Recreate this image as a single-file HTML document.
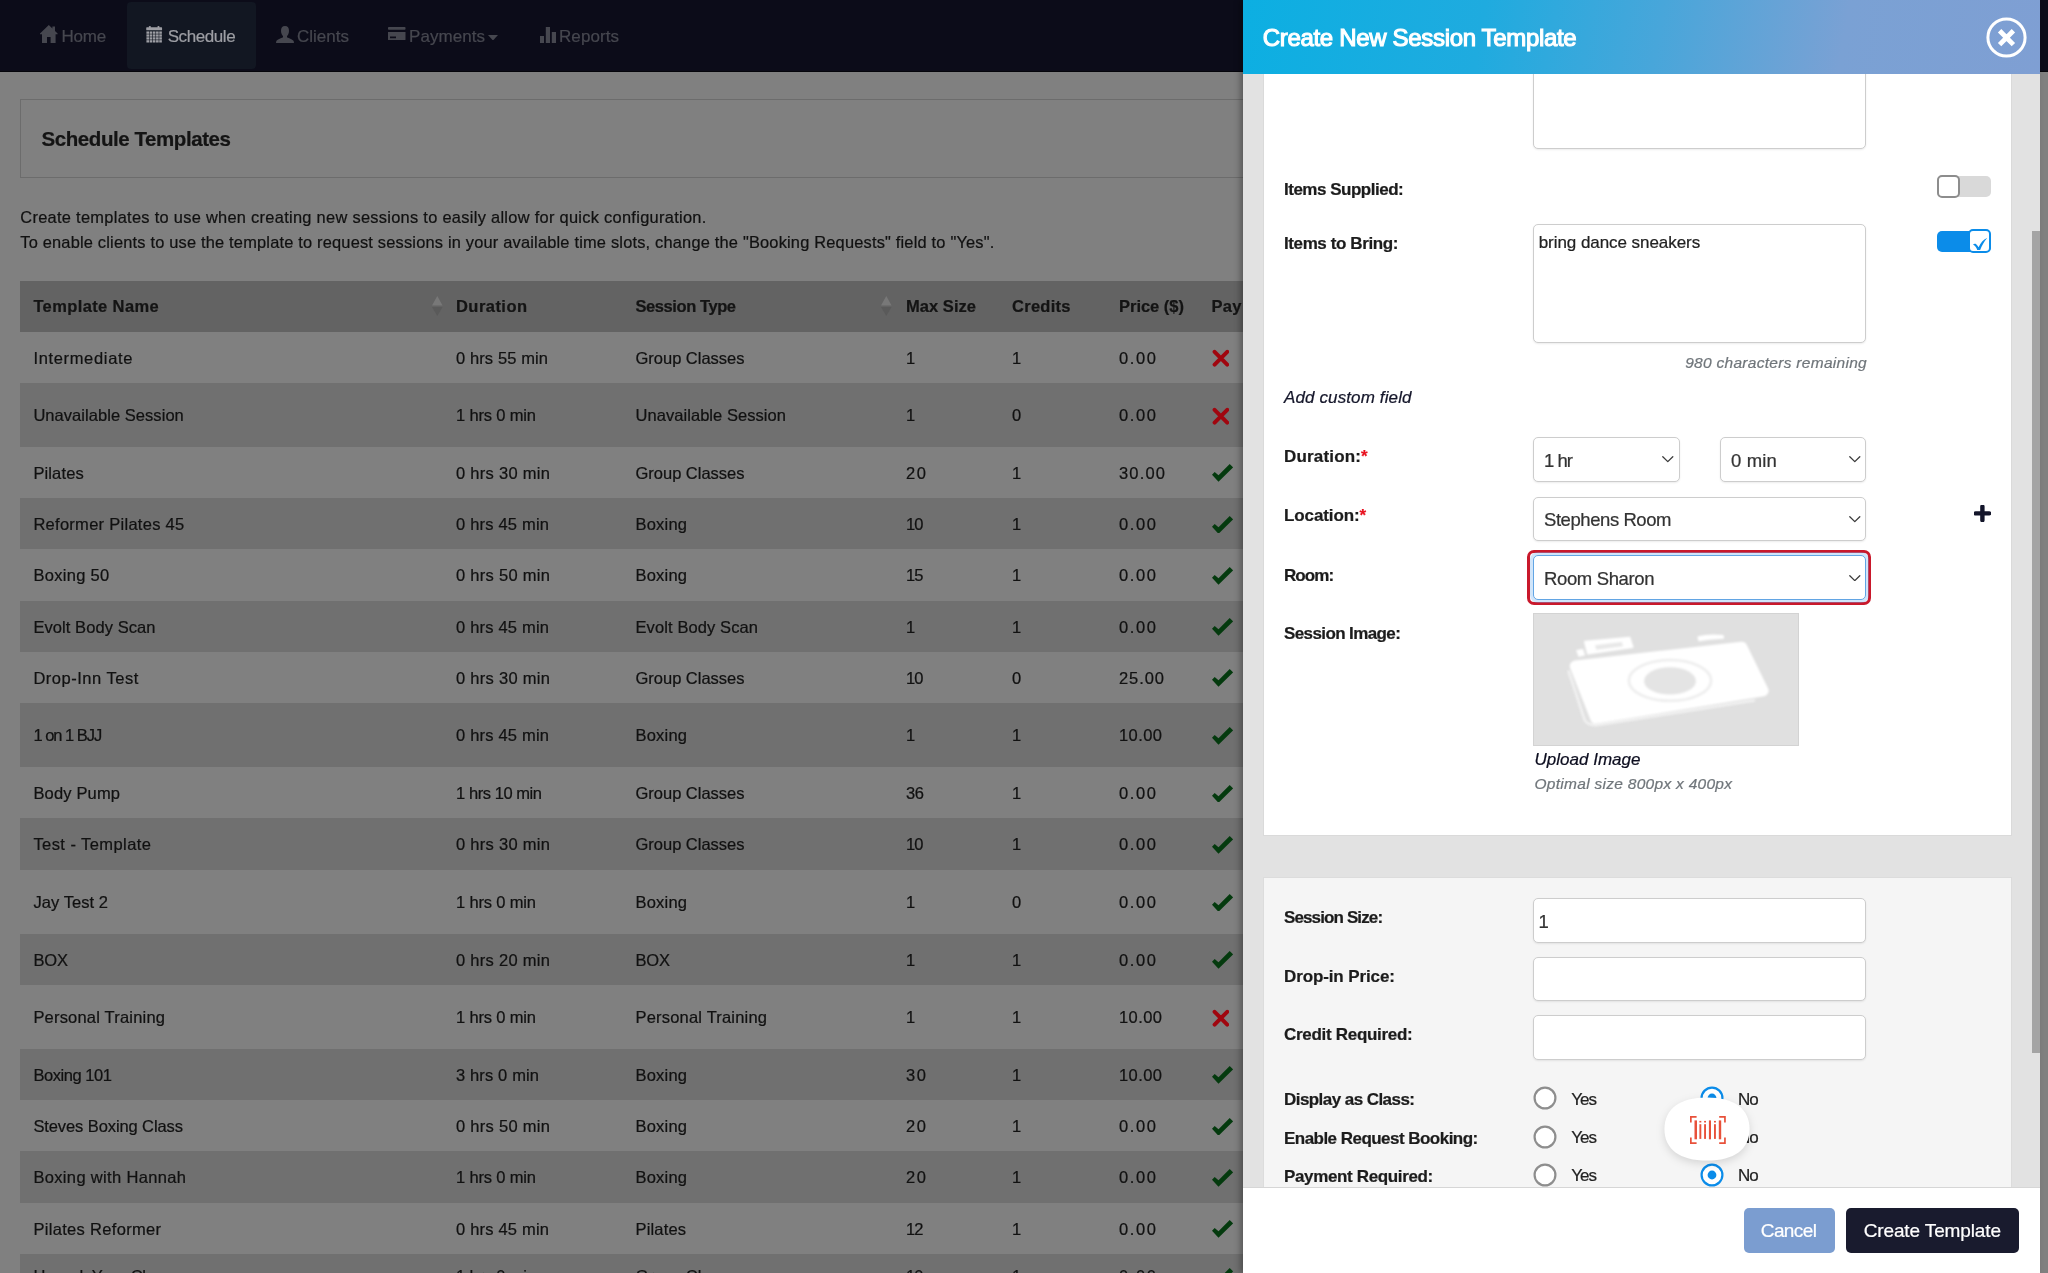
<!DOCTYPE html>
<html lang="en"><head><meta charset="utf-8"><title>Schedule Templates</title>
<style>
html,body{margin:0;padding:0}
body{width:2048px;height:1273px;overflow:hidden;position:relative;background:#808080;font-family:"Liberation Sans", sans-serif;}
.t{position:absolute;white-space:nowrap;line-height:1;display:block}
#bgl,#drawer{position:absolute;left:0;top:0;width:2048px;height:1273px;overflow:hidden;will-change:transform}
.t{-webkit-text-stroke:0.22px currentColor}
</style></head><body>
<div id="bgl">
<div style="position:absolute;left:0.00px;top:0.00px;width:2048.00px;height:71.50px;background:#0c0c19;border-bottom:1px solid #05050b;box-sizing:border-box;"></div>
<div style="position:absolute;left:126.50px;top:2.00px;width:129.10px;height:67.00px;background:#121722;border-radius:4px;"></div>
<svg style="position:absolute;left:40.20px;top:24.90px;" width="17.60" height="18.30" viewBox="0 0 176 183"><path fill="#46474f" d="M88 0 L0 84 L0 92 L20 92 L20 183 L70 183 L70 120 L106 120 L106 183 L156 183 L156 92 L176 92 L176 84 L150 59 L150 14 L124 14 L124 34 Z"/></svg>
<svg style="position:absolute;left:146.40px;top:25.70px;" width="16.30" height="17.10" viewBox="0 0 163 176"><g fill="#9d9ea4"><rect x="0" y="14" width="163" height="30" rx="6"/><rect x="28" y="0" width="18" height="30" rx="6"/><rect x="117" y="0" width="18" height="30" rx="6"/><rect x="2" y="56" width="27" height="24"/><rect x="35" y="56" width="27" height="24"/><rect x="68" y="56" width="27" height="24"/><rect x="101" y="56" width="27" height="24"/><rect x="134" y="56" width="27" height="24"/><rect x="2" y="86" width="27" height="24"/><rect x="35" y="86" width="27" height="24"/><rect x="68" y="86" width="27" height="24"/><rect x="101" y="86" width="27" height="24"/><rect x="134" y="86" width="27" height="24"/><rect x="2" y="116" width="27" height="24"/><rect x="35" y="116" width="27" height="24"/><rect x="68" y="116" width="27" height="24"/><rect x="101" y="116" width="27" height="24"/><rect x="134" y="116" width="27" height="24"/><rect x="2" y="146" width="27" height="24"/><rect x="35" y="146" width="27" height="24"/><rect x="68" y="146" width="27" height="24"/><rect x="101" y="146" width="27" height="24"/><rect x="134" y="146" width="27" height="24"/></g></svg>
<svg style="position:absolute;left:276.00px;top:25.50px;" width="18.00" height="17.50" viewBox="0 0 180 175"><path fill="#46474f" d="M90 0 C62 0 50 20 50 48 C50 72 60 92 70 100 L70 112 C50 122 10 134 4 150 C0 160 0 175 0 175 L180 175 C180 175 180 160 176 150 C170 134 130 122 110 112 L110 100 C120 92 130 72 130 48 C130 20 118 0 90 0 Z"/></svg>
<svg style="position:absolute;left:388.00px;top:26.80px;" width="17.50" height="13.50" viewBox="0 0 175 135"><g fill="#46474f"><rect x="0" y="0" width="175" height="28" rx="8"/><path d="M0 50 H175 V123 a12 12 0 0 1 -12 12 H12 a12 12 0 0 1 -12 -12 Z M20 95 V112 H80 V95 Z"/></g></svg>
<svg style="position:absolute;left:488.00px;top:34.50px;" width="10.00" height="5.50" viewBox="0 0 10 5.5"><path fill="#46474f" d="M0 0 H10 L5 5.5 Z"/></svg>
<svg style="position:absolute;left:539.50px;top:26.50px;" width="16.00" height="16.50" viewBox="0 0 160 165"><g fill="#46474f"><rect x="0" y="90" width="40" height="75"/><rect x="58" y="0" width="42" height="165"/><rect x="118" y="50" width="42" height="115"/></g></svg>
<div style="position:absolute;left:20.00px;top:99.00px;width:2008.00px;height:79.00px;border:1px solid #6c6c6c;box-sizing:border-box;"></div>
<div style="position:absolute;left:20.00px;top:280.60px;width:2008.00px;height:51.10px;background:#636363;"></div>
<svg style="position:absolute;left:432.00px;top:296.00px;" width="10.60" height="20.00" viewBox="0 0 10.6 20"><path fill="#787878" d="M5.3 0 L10.6 9.6 H0 Z"/><path fill="#5a5a5a" d="M0 10.9 H10.6 L5.3 20 Z"/></svg>
<svg style="position:absolute;left:881.00px;top:296.00px;" width="10.60" height="20.00" viewBox="0 0 10.6 20"><path fill="#787878" d="M5.3 0 L10.6 9.6 H0 Z"/><path fill="#5a5a5a" d="M0 10.9 H10.6 L5.3 20 Z"/></svg>
<svg style="position:absolute;left:1211.50px;top:349.02px;" width="17.80" height="18.40" viewBox="0 0 17.8 18.4"><path stroke="#a0060f" stroke-width="4.0" stroke-linecap="round" fill="none" d="M2.6 2.8 L15.2 15.6 M15.2 2.8 L2.6 15.6"/></svg>
<div style="position:absolute;left:20.00px;top:382.95px;width:2008.00px;height:64.00px;background:#707070;"></div>
<svg style="position:absolute;left:1211.50px;top:406.65px;" width="17.80" height="18.40" viewBox="0 0 17.8 18.4"><path stroke="#a0060f" stroke-width="4.0" stroke-linecap="round" fill="none" d="M2.6 2.8 L15.2 15.6 M15.2 2.8 L2.6 15.6"/></svg>
<svg style="position:absolute;left:1211.80px;top:464.38px;" width="21.20" height="17.80" viewBox="0 0 21.2 17.8"><path fill="#043a0e" d="M2.7 8.1 L0 10.8 L6.5 17.8 L21.2 3.4 L17.7 0 L6.5 11.3 Z"/></svg>
<div style="position:absolute;left:20.00px;top:498.20px;width:2008.00px;height:51.25px;background:#707070;"></div>
<svg style="position:absolute;left:1211.80px;top:515.62px;" width="21.20" height="17.80" viewBox="0 0 21.2 17.8"><path fill="#043a0e" d="M2.7 8.1 L0 10.8 L6.5 17.8 L21.2 3.4 L17.7 0 L6.5 11.3 Z"/></svg>
<svg style="position:absolute;left:1211.80px;top:566.88px;" width="21.20" height="17.80" viewBox="0 0 21.2 17.8"><path fill="#043a0e" d="M2.7 8.1 L0 10.8 L6.5 17.8 L21.2 3.4 L17.7 0 L6.5 11.3 Z"/></svg>
<div style="position:absolute;left:20.00px;top:600.70px;width:2008.00px;height:51.25px;background:#707070;"></div>
<svg style="position:absolute;left:1211.80px;top:618.12px;" width="21.20" height="17.80" viewBox="0 0 21.2 17.8"><path fill="#043a0e" d="M2.7 8.1 L0 10.8 L6.5 17.8 L21.2 3.4 L17.7 0 L6.5 11.3 Z"/></svg>
<svg style="position:absolute;left:1211.80px;top:669.38px;" width="21.20" height="17.80" viewBox="0 0 21.2 17.8"><path fill="#043a0e" d="M2.7 8.1 L0 10.8 L6.5 17.8 L21.2 3.4 L17.7 0 L6.5 11.3 Z"/></svg>
<div style="position:absolute;left:20.00px;top:703.20px;width:2008.00px;height:64.00px;background:#707070;"></div>
<svg style="position:absolute;left:1211.80px;top:727.00px;" width="21.20" height="17.80" viewBox="0 0 21.2 17.8"><path fill="#043a0e" d="M2.7 8.1 L0 10.8 L6.5 17.8 L21.2 3.4 L17.7 0 L6.5 11.3 Z"/></svg>
<svg style="position:absolute;left:1211.80px;top:784.62px;" width="21.20" height="17.80" viewBox="0 0 21.2 17.8"><path fill="#043a0e" d="M2.7 8.1 L0 10.8 L6.5 17.8 L21.2 3.4 L17.7 0 L6.5 11.3 Z"/></svg>
<div style="position:absolute;left:20.00px;top:818.45px;width:2008.00px;height:51.25px;background:#707070;"></div>
<svg style="position:absolute;left:1211.80px;top:835.88px;" width="21.20" height="17.80" viewBox="0 0 21.2 17.8"><path fill="#043a0e" d="M2.7 8.1 L0 10.8 L6.5 17.8 L21.2 3.4 L17.7 0 L6.5 11.3 Z"/></svg>
<svg style="position:absolute;left:1211.80px;top:893.50px;" width="21.20" height="17.80" viewBox="0 0 21.2 17.8"><path fill="#043a0e" d="M2.7 8.1 L0 10.8 L6.5 17.8 L21.2 3.4 L17.7 0 L6.5 11.3 Z"/></svg>
<div style="position:absolute;left:20.00px;top:933.70px;width:2008.00px;height:51.25px;background:#707070;"></div>
<svg style="position:absolute;left:1211.80px;top:951.12px;" width="21.20" height="17.80" viewBox="0 0 21.2 17.8"><path fill="#043a0e" d="M2.7 8.1 L0 10.8 L6.5 17.8 L21.2 3.4 L17.7 0 L6.5 11.3 Z"/></svg>
<svg style="position:absolute;left:1211.50px;top:1008.65px;" width="17.80" height="18.40" viewBox="0 0 17.8 18.4"><path stroke="#a0060f" stroke-width="4.0" stroke-linecap="round" fill="none" d="M2.6 2.8 L15.2 15.6 M15.2 2.8 L2.6 15.6"/></svg>
<div style="position:absolute;left:20.00px;top:1048.95px;width:2008.00px;height:51.25px;background:#707070;"></div>
<svg style="position:absolute;left:1211.80px;top:1066.38px;" width="21.20" height="17.80" viewBox="0 0 21.2 17.8"><path fill="#043a0e" d="M2.7 8.1 L0 10.8 L6.5 17.8 L21.2 3.4 L17.7 0 L6.5 11.3 Z"/></svg>
<svg style="position:absolute;left:1211.80px;top:1117.62px;" width="21.20" height="17.80" viewBox="0 0 21.2 17.8"><path fill="#043a0e" d="M2.7 8.1 L0 10.8 L6.5 17.8 L21.2 3.4 L17.7 0 L6.5 11.3 Z"/></svg>
<div style="position:absolute;left:20.00px;top:1151.45px;width:2008.00px;height:51.25px;background:#707070;"></div>
<svg style="position:absolute;left:1211.80px;top:1168.88px;" width="21.20" height="17.80" viewBox="0 0 21.2 17.8"><path fill="#043a0e" d="M2.7 8.1 L0 10.8 L6.5 17.8 L21.2 3.4 L17.7 0 L6.5 11.3 Z"/></svg>
<svg style="position:absolute;left:1211.80px;top:1220.12px;" width="21.20" height="17.80" viewBox="0 0 21.2 17.8"><path fill="#043a0e" d="M2.7 8.1 L0 10.8 L6.5 17.8 L21.2 3.4 L17.7 0 L6.5 11.3 Z"/></svg>
<div style="position:absolute;left:20.00px;top:1253.95px;width:2008.00px;height:51.25px;background:#707070;"></div>
<svg style="position:absolute;left:1211.80px;top:1268.00px;" width="21.20" height="17.80" viewBox="0 0 21.2 17.8"><path fill="#043a0e" d="M2.7 8.1 L0 10.8 L6.5 17.8 L21.2 3.4 L17.7 0 L6.5 11.3 Z"/></svg>
<span class="t" id="t0" style="left:61.40px;top:27.90px;font-size:17px;color:#46474f;letter-spacing:-0.186px;">Home</span>
<span class="t" id="t1" style="left:167.70px;top:27.90px;font-size:17px;color:#9d9ea4;letter-spacing:-0.413px;">Schedule</span>
<span class="t" id="t2" style="left:297.00px;top:27.90px;font-size:17px;color:#46474f;letter-spacing:0.005px;">Clients</span>
<span class="t" id="t3" style="left:409.00px;top:27.90px;font-size:17px;color:#46474f;letter-spacing:0.058px;">Payments</span>
<span class="t" id="t4" style="left:559.00px;top:27.90px;font-size:17px;color:#46474f;letter-spacing:0.078px;">Reports</span>
<span class="t" id="t5" style="left:41.50px;top:128.90px;font-size:20.5px;color:#141414;font-weight:700;letter-spacing:-0.425px;">Schedule Templates</span>
<span class="t" id="t6" style="left:20.30px;top:208.80px;font-size:16.4px;color:#111111;letter-spacing:0.293px;">Create templates to use when creating new sessions to easily allow for quick configuration.</span>
<span class="t" id="t7" style="left:20.30px;top:233.70px;font-size:16.4px;color:#111111;letter-spacing:0.194px;">To enable clients to use the template to request sessions in your available time slots, change the &quot;Booking Requests&quot; field to &quot;Yes&quot;.</span>
<span class="t" id="t8" style="left:33.40px;top:298.30px;font-size:16.5px;color:#141414;font-weight:700;letter-spacing:0.379px;">Template Name</span>
<span class="t" id="t9" style="left:456.00px;top:298.30px;font-size:16.5px;color:#141414;font-weight:700;letter-spacing:0.451px;">Duration</span>
<span class="t" id="t10" style="left:635.50px;top:298.30px;font-size:16.5px;color:#141414;font-weight:700;letter-spacing:-0.423px;">Session Type</span>
<span class="t" id="t11" style="left:906.00px;top:298.30px;font-size:16.5px;color:#141414;font-weight:700;letter-spacing:0.042px;">Max Size</span>
<span class="t" id="t12" style="left:1012.00px;top:298.30px;font-size:16.5px;color:#141414;font-weight:700;letter-spacing:0.273px;">Credits</span>
<span class="t" id="t13" style="left:1119.00px;top:298.30px;font-size:16.5px;color:#141414;font-weight:700;letter-spacing:-0.016px;">Price ($)</span>
<span class="t" id="t14" style="left:1211.50px;top:298.30px;font-size:16.5px;color:#141414;font-weight:700;letter-spacing:0.320px;">Pay</span>
<span class="t" id="t15" style="left:33.40px;top:349.52px;font-size:16.5px;color:#111111;letter-spacing:0.662px;">Intermediate</span>
<span class="t" id="t16" style="left:456.00px;top:349.52px;font-size:16.5px;color:#111111;letter-spacing:0.109px;">0 hrs 55 min</span>
<span class="t" id="t17" style="left:635.50px;top:349.52px;font-size:16.5px;color:#111111;letter-spacing:-0.012px;">Group Classes</span>
<span class="t" id="t18" style="left:906.00px;top:349.52px;font-size:16.5px;color:#111111;">1</span>
<span class="t" id="t19" style="left:1012.00px;top:349.52px;font-size:16.5px;color:#111111;">1</span>
<span class="t" id="t20" style="left:1119.00px;top:349.52px;font-size:16.5px;color:#111111;letter-spacing:1.625px;">0.00</span>
<span class="t" id="t21" style="left:33.40px;top:407.15px;font-size:16.5px;color:#111111;letter-spacing:0.049px;">Unavailable Session</span>
<span class="t" id="t22" style="left:456.00px;top:407.15px;font-size:16.5px;color:#111111;letter-spacing:-0.163px;">1 hrs 0 min</span>
<span class="t" id="t23" style="left:635.50px;top:407.15px;font-size:16.5px;color:#111111;letter-spacing:0.055px;">Unavailable Session</span>
<span class="t" id="t24" style="left:906.00px;top:407.15px;font-size:16.5px;color:#111111;">1</span>
<span class="t" id="t25" style="left:1012.00px;top:407.15px;font-size:16.5px;color:#111111;">0</span>
<span class="t" id="t26" style="left:1119.00px;top:407.15px;font-size:16.5px;color:#111111;letter-spacing:1.625px;">0.00</span>
<span class="t" id="t27" style="left:33.40px;top:464.77px;font-size:16.5px;color:#111111;letter-spacing:0.128px;">Pilates</span>
<span class="t" id="t28" style="left:456.00px;top:464.77px;font-size:16.5px;color:#111111;letter-spacing:0.291px;">0 hrs 30 min</span>
<span class="t" id="t29" style="left:635.50px;top:464.77px;font-size:16.5px;color:#111111;letter-spacing:-0.012px;">Group Classes</span>
<span class="t" id="t30" style="left:906.00px;top:464.77px;font-size:16.5px;color:#111111;letter-spacing:1.641px;">20</span>
<span class="t" id="t31" style="left:1012.00px;top:464.77px;font-size:16.5px;color:#111111;">1</span>
<span class="t" id="t32" style="left:1119.00px;top:464.77px;font-size:16.5px;color:#111111;letter-spacing:1.176px;">30.00</span>
<span class="t" id="t33" style="left:33.40px;top:516.03px;font-size:16.5px;color:#111111;letter-spacing:0.277px;">Reformer Pilates 45</span>
<span class="t" id="t34" style="left:456.00px;top:516.03px;font-size:16.5px;color:#111111;letter-spacing:0.200px;">0 hrs 45 min</span>
<span class="t" id="t35" style="left:635.50px;top:516.03px;font-size:16.5px;color:#111111;letter-spacing:0.209px;">Boxing</span>
<span class="t" id="t36" style="left:906.00px;top:516.03px;font-size:16.5px;color:#111111;letter-spacing:-1.000px;">10</span>
<span class="t" id="t37" style="left:1012.00px;top:516.03px;font-size:16.5px;color:#111111;">1</span>
<span class="t" id="t38" style="left:1119.00px;top:516.03px;font-size:16.5px;color:#111111;letter-spacing:1.625px;">0.00</span>
<span class="t" id="t39" style="left:33.40px;top:567.28px;font-size:16.5px;color:#111111;letter-spacing:0.301px;">Boxing 50</span>
<span class="t" id="t40" style="left:456.00px;top:567.28px;font-size:16.5px;color:#111111;letter-spacing:0.291px;">0 hrs 50 min</span>
<span class="t" id="t41" style="left:635.50px;top:567.28px;font-size:16.5px;color:#111111;letter-spacing:0.209px;">Boxing</span>
<span class="t" id="t42" style="left:906.00px;top:567.28px;font-size:16.5px;color:#111111;letter-spacing:-1.000px;">15</span>
<span class="t" id="t43" style="left:1012.00px;top:567.28px;font-size:16.5px;color:#111111;">1</span>
<span class="t" id="t44" style="left:1119.00px;top:567.28px;font-size:16.5px;color:#111111;letter-spacing:1.625px;">0.00</span>
<span class="t" id="t45" style="left:33.40px;top:618.53px;font-size:16.5px;color:#111111;letter-spacing:0.073px;">Evolt Body Scan</span>
<span class="t" id="t46" style="left:456.00px;top:618.53px;font-size:16.5px;color:#111111;letter-spacing:0.200px;">0 hrs 45 min</span>
<span class="t" id="t47" style="left:635.50px;top:618.53px;font-size:16.5px;color:#111111;letter-spacing:0.102px;">Evolt Body Scan</span>
<span class="t" id="t48" style="left:906.00px;top:618.53px;font-size:16.5px;color:#111111;">1</span>
<span class="t" id="t49" style="left:1012.00px;top:618.53px;font-size:16.5px;color:#111111;">1</span>
<span class="t" id="t50" style="left:1119.00px;top:618.53px;font-size:16.5px;color:#111111;letter-spacing:1.625px;">0.00</span>
<span class="t" id="t51" style="left:33.40px;top:669.78px;font-size:16.5px;color:#111111;letter-spacing:0.513px;">Drop-Inn Test</span>
<span class="t" id="t52" style="left:456.00px;top:669.78px;font-size:16.5px;color:#111111;letter-spacing:0.291px;">0 hrs 30 min</span>
<span class="t" id="t53" style="left:635.50px;top:669.78px;font-size:16.5px;color:#111111;letter-spacing:-0.012px;">Group Classes</span>
<span class="t" id="t54" style="left:906.00px;top:669.78px;font-size:16.5px;color:#111111;letter-spacing:-1.000px;">10</span>
<span class="t" id="t55" style="left:1012.00px;top:669.78px;font-size:16.5px;color:#111111;">0</span>
<span class="t" id="t56" style="left:1119.00px;top:669.78px;font-size:16.5px;color:#111111;letter-spacing:0.926px;">25.00</span>
<span class="t" id="t57" style="left:33.40px;top:727.40px;font-size:16.5px;color:#111111;letter-spacing:-1.000px;">1 on 1 BJJ</span>
<span class="t" id="t58" style="left:456.00px;top:727.40px;font-size:16.5px;color:#111111;letter-spacing:0.200px;">0 hrs 45 min</span>
<span class="t" id="t59" style="left:635.50px;top:727.40px;font-size:16.5px;color:#111111;letter-spacing:0.209px;">Boxing</span>
<span class="t" id="t60" style="left:906.00px;top:727.40px;font-size:16.5px;color:#111111;">1</span>
<span class="t" id="t61" style="left:1012.00px;top:727.40px;font-size:16.5px;color:#111111;">1</span>
<span class="t" id="t62" style="left:1119.00px;top:727.40px;font-size:16.5px;color:#111111;letter-spacing:0.426px;">10.00</span>
<span class="t" id="t63" style="left:33.40px;top:785.03px;font-size:16.5px;color:#111111;letter-spacing:0.163px;">Body Pump</span>
<span class="t" id="t64" style="left:456.00px;top:785.03px;font-size:16.5px;color:#111111;letter-spacing:-0.436px;">1 hrs 10 min</span>
<span class="t" id="t65" style="left:635.50px;top:785.03px;font-size:16.5px;color:#111111;letter-spacing:-0.012px;">Group Classes</span>
<span class="t" id="t66" style="left:906.00px;top:785.03px;font-size:16.5px;color:#111111;letter-spacing:-0.359px;">36</span>
<span class="t" id="t67" style="left:1012.00px;top:785.03px;font-size:16.5px;color:#111111;">1</span>
<span class="t" id="t68" style="left:1119.00px;top:785.03px;font-size:16.5px;color:#111111;letter-spacing:1.625px;">0.00</span>
<span class="t" id="t69" style="left:33.40px;top:836.28px;font-size:16.5px;color:#111111;letter-spacing:0.430px;">Test - Template</span>
<span class="t" id="t70" style="left:456.00px;top:836.28px;font-size:16.5px;color:#111111;letter-spacing:0.291px;">0 hrs 30 min</span>
<span class="t" id="t71" style="left:635.50px;top:836.28px;font-size:16.5px;color:#111111;letter-spacing:-0.012px;">Group Classes</span>
<span class="t" id="t72" style="left:906.00px;top:836.28px;font-size:16.5px;color:#111111;letter-spacing:-1.000px;">10</span>
<span class="t" id="t73" style="left:1012.00px;top:836.28px;font-size:16.5px;color:#111111;">1</span>
<span class="t" id="t74" style="left:1119.00px;top:836.28px;font-size:16.5px;color:#111111;letter-spacing:1.625px;">0.00</span>
<span class="t" id="t75" style="left:33.40px;top:893.90px;font-size:16.5px;color:#111111;letter-spacing:0.068px;">Jay Test 2</span>
<span class="t" id="t76" style="left:456.00px;top:893.90px;font-size:16.5px;color:#111111;letter-spacing:-0.163px;">1 hrs 0 min</span>
<span class="t" id="t77" style="left:635.50px;top:893.90px;font-size:16.5px;color:#111111;letter-spacing:0.209px;">Boxing</span>
<span class="t" id="t78" style="left:906.00px;top:893.90px;font-size:16.5px;color:#111111;">1</span>
<span class="t" id="t79" style="left:1012.00px;top:893.90px;font-size:16.5px;color:#111111;">0</span>
<span class="t" id="t80" style="left:1119.00px;top:893.90px;font-size:16.5px;color:#111111;letter-spacing:1.625px;">0.00</span>
<span class="t" id="t81" style="left:33.40px;top:951.53px;font-size:16.5px;color:#111111;letter-spacing:-0.130px;">BOX</span>
<span class="t" id="t82" style="left:456.00px;top:951.53px;font-size:16.5px;color:#111111;letter-spacing:0.291px;">0 hrs 20 min</span>
<span class="t" id="t83" style="left:635.50px;top:951.53px;font-size:16.5px;color:#111111;letter-spacing:-0.180px;">BOX</span>
<span class="t" id="t84" style="left:906.00px;top:951.53px;font-size:16.5px;color:#111111;">1</span>
<span class="t" id="t85" style="left:1012.00px;top:951.53px;font-size:16.5px;color:#111111;">1</span>
<span class="t" id="t86" style="left:1119.00px;top:951.53px;font-size:16.5px;color:#111111;letter-spacing:1.625px;">0.00</span>
<span class="t" id="t87" style="left:33.40px;top:1009.15px;font-size:16.5px;color:#111111;letter-spacing:0.199px;">Personal Training</span>
<span class="t" id="t88" style="left:456.00px;top:1009.15px;font-size:16.5px;color:#111111;letter-spacing:-0.163px;">1 hrs 0 min</span>
<span class="t" id="t89" style="left:635.50px;top:1009.15px;font-size:16.5px;color:#111111;letter-spacing:0.192px;">Personal Training</span>
<span class="t" id="t90" style="left:906.00px;top:1009.15px;font-size:16.5px;color:#111111;">1</span>
<span class="t" id="t91" style="left:1012.00px;top:1009.15px;font-size:16.5px;color:#111111;">1</span>
<span class="t" id="t92" style="left:1119.00px;top:1009.15px;font-size:16.5px;color:#111111;letter-spacing:0.426px;">10.00</span>
<span class="t" id="t93" style="left:33.40px;top:1066.78px;font-size:16.5px;color:#111111;letter-spacing:-0.442px;">Boxing 101</span>
<span class="t" id="t94" style="left:456.00px;top:1066.78px;font-size:16.5px;color:#111111;letter-spacing:0.138px;">3 hrs 0 min</span>
<span class="t" id="t95" style="left:635.50px;top:1066.78px;font-size:16.5px;color:#111111;letter-spacing:0.209px;">Boxing</span>
<span class="t" id="t96" style="left:906.00px;top:1066.78px;font-size:16.5px;color:#111111;letter-spacing:1.641px;">30</span>
<span class="t" id="t97" style="left:1012.00px;top:1066.78px;font-size:16.5px;color:#111111;">1</span>
<span class="t" id="t98" style="left:1119.00px;top:1066.78px;font-size:16.5px;color:#111111;letter-spacing:0.426px;">10.00</span>
<span class="t" id="t99" style="left:33.40px;top:1118.03px;font-size:16.5px;color:#111111;letter-spacing:-0.096px;">Steves Boxing Class</span>
<span class="t" id="t100" style="left:456.00px;top:1118.03px;font-size:16.5px;color:#111111;letter-spacing:0.291px;">0 hrs 50 min</span>
<span class="t" id="t101" style="left:635.50px;top:1118.03px;font-size:16.5px;color:#111111;letter-spacing:0.209px;">Boxing</span>
<span class="t" id="t102" style="left:906.00px;top:1118.03px;font-size:16.5px;color:#111111;letter-spacing:1.641px;">20</span>
<span class="t" id="t103" style="left:1012.00px;top:1118.03px;font-size:16.5px;color:#111111;">1</span>
<span class="t" id="t104" style="left:1119.00px;top:1118.03px;font-size:16.5px;color:#111111;letter-spacing:1.625px;">0.00</span>
<span class="t" id="t105" style="left:33.40px;top:1169.28px;font-size:16.5px;color:#111111;letter-spacing:0.343px;">Boxing with Hannah</span>
<span class="t" id="t106" style="left:456.00px;top:1169.28px;font-size:16.5px;color:#111111;letter-spacing:-0.163px;">1 hrs 0 min</span>
<span class="t" id="t107" style="left:635.50px;top:1169.28px;font-size:16.5px;color:#111111;letter-spacing:0.209px;">Boxing</span>
<span class="t" id="t108" style="left:906.00px;top:1169.28px;font-size:16.5px;color:#111111;letter-spacing:1.641px;">20</span>
<span class="t" id="t109" style="left:1012.00px;top:1169.28px;font-size:16.5px;color:#111111;">1</span>
<span class="t" id="t110" style="left:1119.00px;top:1169.28px;font-size:16.5px;color:#111111;letter-spacing:1.625px;">0.00</span>
<span class="t" id="t111" style="left:33.40px;top:1220.53px;font-size:16.5px;color:#111111;letter-spacing:0.315px;">Pilates Reformer</span>
<span class="t" id="t112" style="left:456.00px;top:1220.53px;font-size:16.5px;color:#111111;letter-spacing:0.200px;">0 hrs 45 min</span>
<span class="t" id="t113" style="left:635.50px;top:1220.53px;font-size:16.5px;color:#111111;letter-spacing:0.161px;">Pilates</span>
<span class="t" id="t114" style="left:906.00px;top:1220.53px;font-size:16.5px;color:#111111;letter-spacing:-1.000px;">12</span>
<span class="t" id="t115" style="left:1012.00px;top:1220.53px;font-size:16.5px;color:#111111;">1</span>
<span class="t" id="t116" style="left:1119.00px;top:1220.53px;font-size:16.5px;color:#111111;letter-spacing:1.625px;">0.00</span>
<span class="t" id="t117" style="left:33.40px;top:1268.40px;font-size:16.5px;color:#111111;letter-spacing:-0.522px;">Hannah Yoga Class</span>
<span class="t" id="t118" style="left:456.00px;top:1268.40px;font-size:16.5px;color:#111111;letter-spacing:-0.163px;">1 hrs 0 min</span>
<span class="t" id="t119" style="left:635.50px;top:1268.40px;font-size:16.5px;color:#111111;letter-spacing:-0.012px;">Group Classes</span>
<span class="t" id="t120" style="left:906.00px;top:1268.40px;font-size:16.5px;color:#111111;letter-spacing:-1.000px;">10</span>
<span class="t" id="t121" style="left:1012.00px;top:1268.40px;font-size:16.5px;color:#111111;">1</span>
<span class="t" id="t122" style="left:1119.00px;top:1268.40px;font-size:16.5px;color:#111111;letter-spacing:1.625px;">0.00</span>
</div>
<div id="drawer">
<div style="position:absolute;left:1242.50px;top:0.00px;width:797.50px;height:1273.00px;background:#e2e2e2;box-shadow:-3px 0 6px rgba(0,0,0,0.3);"></div>
<div style="position:absolute;left:1263.20px;top:40.00px;width:749.00px;height:795.80px;background:#fff;border:1px solid #dadada;box-sizing:border-box;"></div>
<div style="position:absolute;left:1263.20px;top:877.30px;width:749.00px;height:500.00px;background:#f5f5f5;border:1px solid #dcdcdc;box-sizing:border-box;"></div>
<div style="position:absolute;left:2032.20px;top:230.70px;width:7.80px;height:822.30px;background:#a4a4a4;"></div>
<div style="position:absolute;left:1533.20px;top:40.00px;width:333.20px;height:108.60px;background:#fff;border:1px solid #cdcdcd;border-radius:5px;box-sizing:border-box;box-shadow:0 1px 2px rgba(0,0,0,0.08);"></div>
<div style="position:absolute;left:1937.00px;top:176.00px;width:54.00px;height:21.00px;background:#d9d9d9;border-radius:5px;"></div>
<div style="position:absolute;left:1936.50px;top:175.00px;width:23.40px;height:23.40px;background:#fff;border:2.4px solid #8d8d8d;border-radius:5px;box-sizing:border-box;"></div>
<div style="position:absolute;left:1533.20px;top:224.30px;width:333.20px;height:118.30px;background:#fff;border:1px solid #cdcdcd;border-radius:5px;box-sizing:border-box;box-shadow:0 1px 2px rgba(0,0,0,0.08);"></div>
<div style="position:absolute;left:1937.00px;top:230.70px;width:54.00px;height:21.30px;background:#0b8ce9;border-radius:5px;"></div>
<div style="position:absolute;left:1968.00px;top:229.40px;width:23.30px;height:23.40px;background:#fff;border:2.4px solid #0b8ce9;border-radius:5px;box-sizing:border-box;"></div>
<svg style="position:absolute;left:1973.20px;top:238.00px;" width="14.20" height="12.40" viewBox="0 0 142 124"><path fill="#0b8ce9" d="M0 66 C10 56 22 54 32 62 C42 70 50 82 56 92 C76 50 104 16 142 0 C112 34 88 76 70 124 L44 124 C36 100 22 80 0 66 Z"/></svg>
<div style="position:absolute;left:1533.20px;top:437.20px;width:146.50px;height:44.50px;background:#fff;border:1px solid #cdcdcd;border-radius:5px;box-sizing:border-box;box-shadow:0 1px 2px rgba(0,0,0,0.08);"></div>
<svg style="position:absolute;left:1662.40px;top:456.45px;" width="11.60" height="6.60" viewBox="0 0 11.6 6.6"><path d="M0.8 0.8 L5.8 5.6 L10.8 0.8" fill="none" stroke="#3a3a3a" stroke-width="1.3" stroke-linecap="round" stroke-linejoin="round"/></svg>
<div style="position:absolute;left:1720.10px;top:437.20px;width:146.30px;height:44.50px;background:#fff;border:1px solid #cdcdcd;border-radius:5px;box-sizing:border-box;box-shadow:0 1px 2px rgba(0,0,0,0.08);"></div>
<svg style="position:absolute;left:1849.10px;top:456.45px;" width="11.60" height="6.60" viewBox="0 0 11.6 6.6"><path d="M0.8 0.8 L5.8 5.6 L10.8 0.8" fill="none" stroke="#3a3a3a" stroke-width="1.3" stroke-linecap="round" stroke-linejoin="round"/></svg>
<div style="position:absolute;left:1533.20px;top:496.60px;width:333.20px;height:44.70px;background:#fff;border:1px solid #cdcdcd;border-radius:5px;box-sizing:border-box;box-shadow:0 1px 2px rgba(0,0,0,0.08);"></div>
<svg style="position:absolute;left:1849.10px;top:515.95px;" width="11.60" height="6.60" viewBox="0 0 11.6 6.6"><path d="M0.8 0.8 L5.8 5.6 L10.8 0.8" fill="none" stroke="#3a3a3a" stroke-width="1.3" stroke-linecap="round" stroke-linejoin="round"/></svg>
<svg style="position:absolute;left:1974.20px;top:504.80px;" width="16.80" height="16.80" viewBox="0 0 16.8 16.8"><path d="M8.4 1.6 V15.2 M1.6 8.4 H15.2" stroke="#13152a" stroke-width="4.4" stroke-linecap="round" fill="none"/></svg>
<div style="position:absolute;left:1527.20px;top:550.00px;width:344.00px;height:55.20px;border:3px solid #c9182b;border-radius:7px;box-sizing:border-box;"></div>
<div style="position:absolute;left:1533.20px;top:555.20px;width:333.20px;height:44.70px;background:#fff;border:1.5px solid #62a5e4;border-radius:5px;box-sizing:border-box;box-shadow:0 0 0 3px rgba(120,180,240,0.35);"></div>
<svg style="position:absolute;left:1849.10px;top:574.55px;" width="11.60" height="6.60" viewBox="0 0 11.6 6.6"><path d="M0.8 0.8 L5.8 5.6 L10.8 0.8" fill="none" stroke="#3a3a3a" stroke-width="1.3" stroke-linecap="round" stroke-linejoin="round"/></svg>
<div style="position:absolute;left:1533.00px;top:613.30px;width:265.80px;height:132.50px;background:#e0e0e0;border:1px solid #d3d3d3;box-sizing:border-box;"></div>
<svg style="position:absolute;left:1520.00px;top:600.00px;filter:blur(0.8px);" width="300.00" height="200.00" viewBox="0 0 1910 1273"><g fill="#fff" stroke="#fff" stroke-linejoin="round"><path stroke-width="70" d="M352 420 L1412 300 L1548 578 L482 752 Z"/><path stroke-width="10" d="M412 265 L698 238 L718 300 L432 342 Z"/><path stroke-width="8" d="M362 322 L398 315 L410 350 L376 358 Z"/><path stroke-width="10" d="M1135 236 Q1200 218 1292 228 L1294 242 Q1200 248 1140 258 Z"/></g><path d="M310 455 L412 765 Q432 800 492 796 L1490 640" fill="none" stroke="#f2f2f2" stroke-width="16" stroke-linecap="round" stroke-linejoin="round"/><ellipse cx="955" cy="512" rx="262" ry="130" fill="none" stroke="#ededed" stroke-width="16"/><ellipse cx="955" cy="515" rx="165" ry="87" fill="#e4e4e4"/><path d="M478 288 L648 268 L656 294 L486 316 Z" fill="#e8e8e8"/></svg>
<div style="position:absolute;left:1533.20px;top:898.30px;width:333.20px;height:44.50px;background:#fff;border:1px solid #cdcdcd;border-radius:5px;box-sizing:border-box;box-shadow:0 1px 2px rgba(0,0,0,0.08);"></div>
<div style="position:absolute;left:1533.20px;top:956.60px;width:333.20px;height:44.50px;background:#fff;border:1px solid #cdcdcd;border-radius:5px;box-sizing:border-box;box-shadow:0 1px 2px rgba(0,0,0,0.08);"></div>
<div style="position:absolute;left:1533.20px;top:1015.00px;width:333.20px;height:44.50px;background:#fff;border:1px solid #cdcdcd;border-radius:5px;box-sizing:border-box;box-shadow:0 1px 2px rgba(0,0,0,0.08);"></div>
<svg style="position:absolute;left:1533.00px;top:1086.10px;" width="24.00" height="24.00" viewBox="0 0 24 24"><circle cx="12" cy="12" r="10.4" fill="#fff" stroke="#8e8e8e" stroke-width="2.2"/></svg>
<svg style="position:absolute;left:1699.70px;top:1086.10px;" width="24.00" height="24.00" viewBox="0 0 24 24"><circle cx="12" cy="12" r="10.4" fill="#fff" stroke="#0b8ce9" stroke-width="2.2"/><circle cx="12" cy="12" r="4.4" fill="#0b8ce9"/></svg>
<svg style="position:absolute;left:1533.00px;top:1124.80px;" width="24.00" height="24.00" viewBox="0 0 24 24"><circle cx="12" cy="12" r="10.4" fill="#fff" stroke="#8e8e8e" stroke-width="2.2"/></svg>
<svg style="position:absolute;left:1699.70px;top:1124.80px;" width="24.00" height="24.00" viewBox="0 0 24 24"><circle cx="12" cy="12" r="10.4" fill="#fff" stroke="#0b8ce9" stroke-width="2.2"/><circle cx="12" cy="12" r="4.4" fill="#0b8ce9"/></svg>
<svg style="position:absolute;left:1533.00px;top:1162.70px;" width="24.00" height="24.00" viewBox="0 0 24 24"><circle cx="12" cy="12" r="10.4" fill="#fff" stroke="#8e8e8e" stroke-width="2.2"/></svg>
<svg style="position:absolute;left:1699.70px;top:1162.70px;" width="24.00" height="24.00" viewBox="0 0 24 24"><circle cx="12" cy="12" r="10.4" fill="#fff" stroke="#0b8ce9" stroke-width="2.2"/><circle cx="12" cy="12" r="4.4" fill="#0b8ce9"/></svg>
<svg style="position:absolute;left:1647.25px;top:1079.40px;z-index:4;filter:drop-shadow(0 3px 4px rgba(0,0,0,0.13));" width="120.00" height="100.00" viewBox="0 0 120 100"><path d="M17.450000000000003 50 C17.450000000000003 29.776 32.768 18.4 60 18.4 C87.232 18.4 102.55 29.776 102.55 50 C102.55 70.224 87.232 81.6 60 81.6 C32.768 81.6 17.450000000000003 70.224 17.450000000000003 50 Z" fill="#fff"/></svg>
<svg style="position:absolute;left:1690.00px;top:1115.50px;z-index:5;" width="35.80" height="28.00" viewBox="0 0 35.8 28"><g fill="none" stroke="#e8513a" stroke-width="1.7"><path d="M6.6 0.85 H0.85 V6.6 M29.2 0.85 H34.95 V6.6 M6.6 27.15 H0.85 V21.4 M29.2 27.15 H34.95 V21.4"/></g><g fill="#e8513a"><rect x="4.5" y="4.4" width="2.5" height="18.9"/><rect x="18.9" y="4.4" width="2.1" height="18.9"/><rect x="28.8" y="4.4" width="2.4" height="18.9"/><rect x="9.4" y="4.9" width="1.9" height="1.6"/><rect x="9.4" y="8.2" width="1.9" height="14.7"/><rect x="14.1" y="4.9" width="1.9" height="1.6"/><rect x="14.1" y="8.2" width="1.9" height="14.7"/><rect x="24.0" y="4.9" width="1.9" height="1.6"/><rect x="24.0" y="8.2" width="1.9" height="14.7"/></g></svg>
<div style="position:absolute;left:1242.50px;top:1187.20px;width:797.50px;height:100.00px;background:#fff;border-top:1px solid #d6d6d6;box-sizing:border-box;z-index:6;"></div>
<div style="position:absolute;left:1743.70px;top:1208.00px;width:91.00px;height:45.00px;background:#7b9dd0;border-radius:5px;z-index:7;"></div>
<div style="position:absolute;left:1846.00px;top:1208.00px;width:172.80px;height:45.00px;background:#191b2e;border-radius:5px;z-index:7;"></div>
<div style="position:absolute;left:1242.50px;top:0.00px;width:797.50px;height:73.80px;background:linear-gradient(100deg,#0cafe2 0%,#1fabdf 30%,#48a6da 52%,#7aa1d4 75%,#7f9fd3 100%);z-index:6;"></div>
<svg style="position:absolute;left:1986.00px;top:16.70px;z-index:8;" width="41.00" height="41.00" viewBox="0 0 41 41"><circle cx="20.5" cy="20.5" r="18.6" fill="none" stroke="#fff" stroke-width="3"/><path d="M13.6 13.8 L27.4 27.6 M27.4 13.8 L13.6 27.6" stroke="#fff" stroke-width="4.8" fill="none"/></svg>
<span class="t" id="t123" style="left:1284.00px;top:180.70px;font-size:17px;color:#1c1c1c;font-weight:700;letter-spacing:-0.491px;">Items Supplied:</span>
<span class="t" id="t124" style="left:1284.00px;top:235.20px;font-size:17px;color:#1c1c1c;font-weight:700;letter-spacing:-0.397px;">Items to Bring:</span>
<span class="t" id="t125" style="left:1538.70px;top:234.20px;font-size:17px;color:#222;letter-spacing:-0.055px;">bring dance sneakers</span>
<span class="t" id="t126" style="right:181.30px;top:354.50px;font-size:15.5px;color:#70767b;font-style:italic;letter-spacing:0.287px;margin-right:-0.287px;">980 characters remaining</span>
<span class="t" id="t127" style="left:1284.00px;top:389.00px;font-size:17px;color:#14162a;font-style:italic;letter-spacing:0.121px;">Add custom field</span>
<span class="t" id="t128" style="left:1284.00px;top:448.20px;font-size:17px;color:#1c1c1c;font-weight:700;letter-spacing:0.170px;">Duration:<span style="color:#e8101e">*</span></span>
<span class="t" id="t129" style="left:1544.00px;top:451.55px;font-size:18.5px;color:#333;letter-spacing:-1.000px;">1 hr</span>
<span class="t" id="t130" style="left:1730.90px;top:451.55px;font-size:18.5px;color:#333;letter-spacing:0.188px;">0 min</span>
<span class="t" id="t131" style="left:1284.00px;top:507.40px;font-size:17px;color:#1c1c1c;font-weight:700;letter-spacing:-0.103px;">Location:<span style="color:#e8101e">*</span></span>
<span class="t" id="t132" style="left:1544.00px;top:511.05px;font-size:18.5px;color:#333;letter-spacing:-0.431px;">Stephens Room</span>
<span class="t" id="t133" style="left:1284.00px;top:566.60px;font-size:17px;color:#1c1c1c;font-weight:700;letter-spacing:-0.907px;">Room:</span>
<span class="t" id="t134" style="left:1544.00px;top:569.65px;font-size:18.5px;color:#333;letter-spacing:-0.366px;">Room Sharon</span>
<span class="t" id="t135" style="left:1284.00px;top:624.70px;font-size:17px;color:#1c1c1c;font-weight:700;letter-spacing:-0.609px;">Session Image:</span>
<span class="t" id="t136" style="left:1534.50px;top:750.70px;font-size:17px;color:#0c0d1f;font-style:italic;letter-spacing:0.014px;">Upload Image</span>
<span class="t" id="t137" style="left:1534.50px;top:775.60px;font-size:15.5px;color:#70767b;font-style:italic;letter-spacing:0.284px;">Optimal size 800px x 400px</span>
<span class="t" id="t138" style="left:1284.00px;top:909.10px;font-size:17px;color:#1c1c1c;font-weight:700;letter-spacing:-0.876px;">Session Size:</span>
<span class="t" id="t139" style="left:1538.50px;top:912.50px;font-size:18.5px;color:#333;">1</span>
<span class="t" id="t140" style="left:1284.00px;top:967.50px;font-size:17px;color:#1c1c1c;font-weight:700;letter-spacing:-0.116px;">Drop-in Price:</span>
<span class="t" id="t141" style="left:1284.00px;top:1025.90px;font-size:17px;color:#1c1c1c;font-weight:700;letter-spacing:-0.299px;">Credit Required:</span>
<span class="t" id="t142" style="left:1284.00px;top:1091.40px;font-size:17px;color:#1c1c1c;font-weight:700;letter-spacing:-0.554px;">Display as Class:</span>
<span class="t" id="t143" style="left:1571.30px;top:1090.60px;font-size:17px;color:#222;letter-spacing:-1.000px;">Yes</span>
<span class="t" id="t144" style="left:1738.00px;top:1090.60px;font-size:17px;color:#222;letter-spacing:-1.000px;">No</span>
<span class="t" id="t145" style="left:1284.00px;top:1130.00px;font-size:17px;color:#1c1c1c;font-weight:700;letter-spacing:-0.533px;">Enable Request Booking:</span>
<span class="t" id="t146" style="left:1571.30px;top:1129.30px;font-size:17px;color:#222;letter-spacing:-1.000px;">Yes</span>
<span class="t" id="t147" style="left:1738.00px;top:1129.30px;font-size:17px;color:#222;letter-spacing:-1.000px;">No</span>
<span class="t" id="t148" style="left:1284.00px;top:1167.90px;font-size:17px;color:#1c1c1c;font-weight:700;letter-spacing:-0.359px;">Payment Required:</span>
<span class="t" id="t149" style="left:1571.30px;top:1167.20px;font-size:17px;color:#222;letter-spacing:-1.000px;">Yes</span>
<span class="t" id="t150" style="left:1738.00px;top:1167.20px;font-size:17px;color:#222;letter-spacing:-1.000px;">No</span>
<span class="t" id="t151" style="left:1760.80px;top:1221.20px;font-size:19px;color:#fff;letter-spacing:-0.611px;z-index:8;">Cancel</span>
<span class="t" id="t152" style="left:1863.70px;top:1221.20px;font-size:19px;color:#fff;letter-spacing:-0.126px;z-index:8;">Create Template</span>
<span class="t" id="t153" style="left:1262.80px;top:26.00px;font-size:24px;color:#fff;letter-spacing:-0.327px;z-index:8;-webkit-text-stroke:1.1px #fff;">Create New Session Template</span>
</div>
</body></html>
